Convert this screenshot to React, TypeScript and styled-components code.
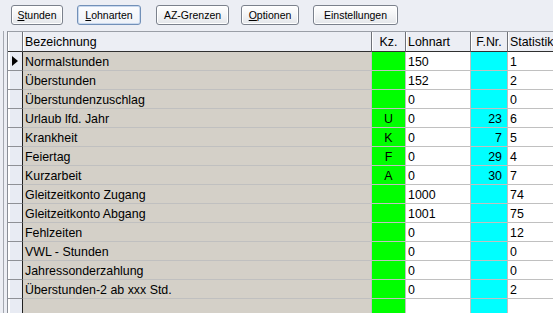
import { Fragment } from 'react';
import styled, { createGlobalStyle } from 'styled-components';

const GlobalStyle = createGlobalStyle`
  html, body {
    margin: 0;
    padding: 0;
    background: #eceef4;
    overflow: hidden;
  }
  * {
    box-sizing: border-box;
  }
`;

const Screen = styled.div`
  width: 553px;
  height: 313px;
  overflow: hidden;
  font-family: 'Liberation Sans', Arial, sans-serif;
  color: #000;
`;

const Toolbar = styled.div`
  display: flex;
  align-items: flex-start;
  height: 31px;
  padding: 5px 0 0 11px;
`;

const ToolButton = styled.button<{ $w: number; $gap: number; $active?: boolean }>`
  width: ${({ $w }) => $w}px;
  height: 20px;
  margin-right: ${({ $gap }) => $gap}px;
  padding: 0;
  border: 1px solid ${({ $active }) => ($active ? '#7290b8' : '#7b818c')};
  border-radius: 3px;
  background: ${({ $active }) =>
    $active
      ? 'linear-gradient(#fbfcfe, #eef2f8)'
      : 'linear-gradient(#ffffff 0%, #f3f4f6 50%, #e4e6ea 100%)'};
  box-shadow: ${({ $active }) =>
    $active ? 'inset 0 0 0 1px #c8d8ee' : 'inset 0 0 0 1px #ffffff'};
  font-family: 'Liberation Sans', Arial, sans-serif;
  font-size: 10.5px;
  color: #000;
  line-height: 17px;
  text-align: center;

  u {
    text-decoration: underline;
  }
`;

const Frame = styled.div`
  margin-left: 3px;
  padding-left: 3px;
  border-left: 1px solid #a4a8b0;
  height: 282px;
`;

const Grid = styled.div`
  display: grid;
  grid-template-columns: 15px 349px 34px 65px 37px 80px;
  border-left: 1px solid #8a8e96;
  border-top: 1px solid #9a9ea6;
  font-size: 12.4px;
`;

const HeadCell = styled.div<{ $center?: boolean }>`
  height: 20px;
  padding: 0 2px;
  border-right: 1px solid #6e7178;
  border-bottom: 1px solid #303030;
  background: #eceef4;
  box-shadow: inset 1px 0 0 #ffffff;
  line-height: 21px;
  text-align: ${({ $center }) => ($center ? 'center' : 'left')};
  white-space: nowrap;
  overflow: hidden;
`;

const Indicator = styled.div`
  position: relative;
  height: 19px;
  border-right: 1px solid #202020;
  border-bottom: 1px solid #8e9096;
  background: #e8ebf3;
  box-shadow: inset 2px 0 0 #ffffff;
`;

const Pointer = styled.span`
  position: absolute;
  left: 4px;
  top: 4px;
  width: 0;
  height: 0;
  border-top: 5px solid transparent;
  border-bottom: 5px solid transparent;
  border-left: 6px solid #000;
`;

type Tone = 'gray' | 'green' | 'white' | 'cyan';

const toneColor: Record<Tone, string> = {
  gray: '#d4d0c8',
  green: '#00ff00',
  white: '#ffffff',
  cyan: '#00ffff',
};

const Cell = styled.div<{ $tone: Tone; $align?: 'left' | 'center' | 'right' }>`
  height: 19px;
  padding: 0 ${({ $align }) => ($align === 'right' ? '5px' : '2px')};
  border-right: 1px solid #c0c0c0;
  border-bottom: 1px solid #c0c0c0;
  background: ${({ $tone }) => toneColor[$tone]};
  line-height: 20px;
  text-align: ${({ $align }) => $align ?? 'left'};
  white-space: nowrap;
  overflow: hidden;
`;

type Row = {
  name: string;
  kz: string;
  lohnart: string;
  fnr: string;
  stat: string;
};

const rows: Row[] = [
  { name: 'Normalstunden', kz: '', lohnart: '150', fnr: '', stat: '1' },
  { name: 'Überstunden', kz: '', lohnart: '152', fnr: '', stat: '2' },
  { name: 'Überstundenzuschlag', kz: '', lohnart: '0', fnr: '', stat: '0' },
  { name: 'Urlaub lfd. Jahr', kz: 'U', lohnart: '0', fnr: '23', stat: '6' },
  { name: 'Krankheit', kz: 'K', lohnart: '0', fnr: '7', stat: '5' },
  { name: 'Feiertag', kz: 'F', lohnart: '0', fnr: '29', stat: '4' },
  { name: 'Kurzarbeit', kz: 'A', lohnart: '0', fnr: '30', stat: '7' },
  { name: 'Gleitzeitkonto Zugang', kz: '', lohnart: '1000', fnr: '', stat: '74' },
  { name: 'Gleitzeitkonto Abgang', kz: '', lohnart: '1001', fnr: '', stat: '75' },
  { name: 'Fehlzeiten', kz: '', lohnart: '0', fnr: '', stat: '12' },
  { name: 'VWL - Stunden', kz: '', lohnart: '0', fnr: '', stat: '0' },
  { name: 'Jahressonderzahlung', kz: '', lohnart: '0', fnr: '', stat: '0' },
  { name: 'Überstunden-2 ab xxx Std.', kz: '', lohnart: '0', fnr: '', stat: '2' },
  { name: '', kz: '', lohnart: '', fnr: '', stat: '' },
];

function App() {
  return (
    <Screen>
      <GlobalStyle />
      <Toolbar>
        <ToolButton $w={52} $gap={14}>
          <u>S</u>tunden
        </ToolButton>
        <ToolButton $w={64} $gap={15} $active>
          <u>L</u>ohnarten
        </ToolButton>
        <ToolButton $w={73} $gap={12}>
          AZ-Grenzen
        </ToolButton>
        <ToolButton $w={58} $gap={14}>
          <u>O</u>ptionen
        </ToolButton>
        <ToolButton $w={85} $gap={0}>
          Einstellungen
        </ToolButton>
      </Toolbar>
      <Frame>
        <Grid>
          <HeadCell />
          <HeadCell>Bezeichnung</HeadCell>
          <HeadCell $center>Kz.</HeadCell>
          <HeadCell>Lohnart</HeadCell>
          <HeadCell $center>F.Nr.</HeadCell>
          <HeadCell>Statistik</HeadCell>
          {rows.map((r, i) => (
            <Fragment key={i}>
              <Indicator>{i === 0 && <Pointer />}</Indicator>
              <Cell $tone="gray">{r.name}</Cell>
              <Cell $tone="green" $align="center">{r.kz}</Cell>
              <Cell $tone="white">{r.lohnart}</Cell>
              <Cell $tone="cyan" $align="right">{r.fnr}</Cell>
              <Cell $tone="white">{r.stat}</Cell>
            </Fragment>
          ))}
        </Grid>
      </Frame>
    </Screen>
  );
}

export default App;
